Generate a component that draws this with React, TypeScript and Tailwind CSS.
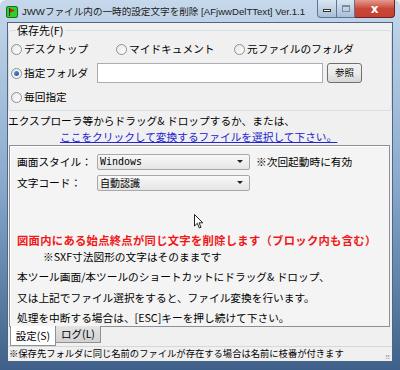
import React from 'react'

const jp = { fontFamily: '"Noto Sans CJK JP", "Liberation Sans", sans-serif' }

function Radio({ checked = false }: { checked?: boolean }) {
  return (
    <span className="flex h-[11px] w-[11px] shrink-0 items-center justify-center rounded-full border border-[#8e8f8f] bg-gradient-to-br from-[#e6e6e6] to-[#ffffff]">
      {checked && <span className="h-[5px] w-[5px] rounded-full bg-gradient-to-br from-[#5aa0e6] to-[#1b4f9c]" />}
    </span>
  )
}

function Select({ value, mono = false }: { value: string; mono?: boolean }) {
  return (
    <div className="flex h-[16px] w-[153px] items-center justify-between rounded-[2px] border border-[#a8a8a8] bg-gradient-to-b from-[#f9f9f9] to-[#e5e5e5] pl-[2px] pr-[6px]">
      <span
        className="text-[10px] leading-none text-black"
        style={mono ? { fontFamily: '"DejaVu Sans Mono", monospace' } : jp}
      >
        {value}
      </span>
      <span className="h-0 w-0 border-x-[3px] border-t-[3px] border-x-transparent border-t-[#222]" />
    </div>
  )
}

export default function App() {
  return (
    <div className="h-[370px] w-[400px] overflow-hidden bg-[#f0f0f0]" style={jp}>
      <div className="flex h-full w-full flex-col rounded-t-[6px] bg-gradient-to-b from-[#c6d8eb] via-[#88a9cc] to-[#3f608a]">
        {/* title bar */}
        <div className="flex h-[22px] items-start">
          <div className="ml-[6px] mt-[6px] flex h-[12px] w-[12px] shrink-0 items-center justify-center rounded-[2px] border border-[#1c6e1c] bg-[#2bd12b]">
            <svg width="8" height="8" viewBox="0 0 8 8">
              <rect x="1" y="0" width="1" height="8" fill="#333" />
              <path d="M2 0.5 L7 2.5 L2 4.5 Z" fill="#e01010" />
            </svg>
          </div>
          <span
            className="ml-[4px] mt-[5px] whitespace-nowrap text-[9.6px] leading-[14px] text-[#1b1b1b]"
            style={{ fontFamily: '"Liberation Sans", "Noto Sans CJK JP", sans-serif' }}
          >
            JWWファイル内の一時的設定文字を削除 [AFjwwDelTText] Ver.1.1
          </span>
          <div className="ml-auto mr-[5px] flex h-[18px] shrink-0">
            <div className="flex w-[20px] items-center justify-center rounded-bl-[4px] border border-t-0 border-[#5d7698] bg-gradient-to-b from-[#dbe6f2] to-[#a9bfd8]">
              <span className="mt-[3px] h-[3px] w-[8px] border border-[#333] bg-white" />
            </div>
            <div className="flex w-[18px] items-center justify-center border-y border-r border-t-0 border-[#5d7698] bg-gradient-to-b from-[#dbe6f2] to-[#a9bfd8]">
              <span className="h-[7px] w-[8px] border border-[#7b8ca2] border-t-2" />
            </div>
            <div className="flex w-[40px] items-center justify-center rounded-br-[4px] border border-t-0 border-l-0 border-[#6a2424] bg-gradient-to-b from-[#e39a8c] via-[#c9483a] to-[#c7402f]">
              <span className="text-[12px] font-bold leading-none text-white" style={{ fontFamily: '"DejaVu Sans", sans-serif' }}>
                x
              </span>
            </div>
          </div>
        </div>

        {/* client area */}
        <div className="mx-[7px] flex h-[340px] flex-col border border-[#4d6685] bg-[#f0f0f0] text-[10.7px] leading-[14px] text-black">
          <fieldset className="mt-[1px] h-[87px] rounded-[3px] border border-[#d5dfe5] pl-[2px]">
            <legend className="ml-[5px] whitespace-nowrap px-[1px] text-[11px] leading-[12px]">保存先(F)</legend>
            <div className="mt-[2px] flex h-[22px] items-center">
              <div className="flex w-[105px] items-center gap-[2px]">
                <Radio />
                <span>デスクトップ</span>
              </div>
              <div className="flex w-[118px] items-center gap-[2px]">
                <Radio />
                <span>マイドキュメント</span>
              </div>
              <div className="flex items-center gap-[2px]">
                <Radio />
                <span>元ファイルのフォルダ</span>
              </div>
            </div>
            <div className="flex h-[26px] items-center">
              <div className="flex w-[86px] items-center gap-[2px]">
                <Radio checked />
                <span>指定フォルダ</span>
              </div>
              <div className="h-[20px] w-[226px] border border-[#abadb3] bg-white" />
              <button className="ml-[4px] h-[20px] w-[35px] rounded-[3px] border border-[#707070] bg-gradient-to-b from-[#f2f2f2] via-[#ebebeb] to-[#d6d6d6] text-[9.5px] leading-none">
                参照
              </button>
            </div>
            <div className="flex h-[22px] items-center gap-[2px]">
              <Radio />
              <span>毎回指定</span>
            </div>
          </fieldset>

          <div className="mt-[3px] h-[14px]">エクスプローラ等からドラッグ& ドロップするか、または、</div>
          <div className="mt-[2px] h-[14px] pl-[52px] text-[#2323d0] underline">
            ここをクリックして変換するファイルを選択して下さい。
          </div>

          {/* tab page */}
          <div className="ml-[1px] mt-[1px] flex h-[182px] w-[381px] flex-col border border-[#8d9096] bg-[#f4f4f4] pl-[7px] shadow-[inset_1px_1px_0_#ffffff]">
            <div className="mt-[7px] flex h-[17px] items-center">
              <span className="w-[80px]">画面スタイル：</span>
              <Select value="Windows" mono />
              <span className="ml-[6px]">※次回起動時に有効</span>
            </div>
            <div className="mt-[4px] flex h-[17px] items-center">
              <span className="w-[80px]">文字コード：</span>
              <Select value="自動認識" />
            </div>
            <div className="relative h-[42px]">
              <svg className="absolute left-[177px] top-[23px]" width="10" height="15" viewBox="0 0 10 15">
                <path d="M0.5 0.5 L0.5 12 L3.3 9.3 L5.3 14 L7 13.3 L5 8.8 L8.8 8.8 Z" fill="#fff" stroke="#222" strokeWidth="1" />
              </svg>
            </div>
            <div className="whitespace-nowrap text-[11.3px] font-bold tracking-[0.3px] text-[#f01818]">
              図面内にある始点終点が同じ文字を削除します（ブロック内も含む）
            </div>
            <div className="mt-[3px] pl-[26px]">※SXF寸法図形の文字はそのままです</div>
            <div className="mt-[6px]">本ツール画面/本ツールのショートカットにドラッグ& ドロップ、</div>
            <div className="mt-[7px]">又は上記でファイル選択をすると、ファイル変換を行います。</div>
            <div className="mt-[6px]">処理を中断する場合は、[ESC]キーを押し続けて下さい。</div>
          </div>

          {/* tabs */}
          <div className="-mt-[1px] ml-[2px] flex h-[20px] items-start">
            <div className="flex h-[20px] w-[46px] items-center justify-center border border-t-0 border-[#8d9096] bg-white text-[10.5px]">
              設定(S)
            </div>
            <div className="flex h-[17px] w-[45px] items-center justify-center border border-l-0 border-t-0 border-[#8d9096] bg-gradient-to-b from-[#e4e4e4] to-[#d2d2d2] text-[10.5px]">
              ログ(L)
            </div>
          </div>

          {/* status bar */}
          <div className="flex h-[15px] items-center border-t border-[#d7d7d7] pl-[1px] text-[9.3px] leading-none">
            <span className="whitespace-nowrap">※保存先フォルダに同じ名前のファイルが存在する場合は名前に枝番が付きます</span>
            <span className="ml-auto mr-[2px] mt-[6px] text-[7px] leading-none text-[#a0a0a0]">⠿</span>
          </div>
        </div>
      </div>
    </div>
  )
}
